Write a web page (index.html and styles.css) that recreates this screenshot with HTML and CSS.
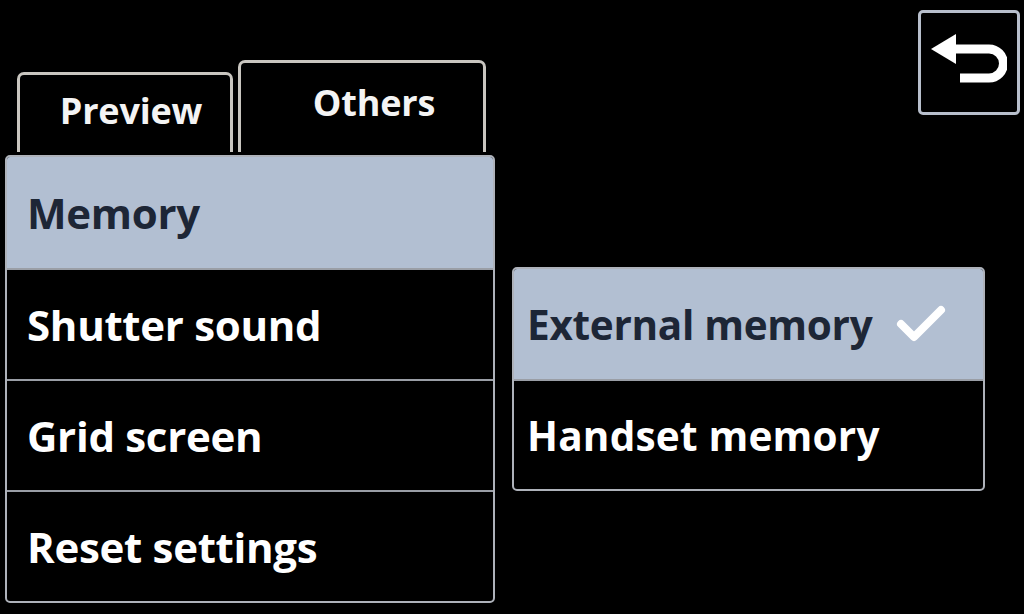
FILE: index.html
```html
<!DOCTYPE html>
<html lang="en">
<head>
  <meta charset="UTF-8" />
  <title>Camera settings</title>
  <link rel="stylesheet" href="styles.css">
</head>
<body>
  <div class="screen">
    <div class="panel">
      <div class="tabs">
        <div class="tab tab-preview">Preview</div>
        <div class="tab tab-others">Others</div>
      </div>
      <ul class="list">
        <li class="row selected">Memory</li>
        <li class="row">Shutter sound</li>
        <li class="row">Grid screen</li>
        <li class="row">Reset settings</li>
      </ul>
    </div>
    <div class="side">
      <div class="back">
        <svg class="back-icon" width="76" height="50" viewBox="0 0 76 50">
          <polygon points="0,16 25,1 25,31" fill="#fff"/>
          <path d="M22 16 H58 A14.5 14.5 0 0 1 58 45 H29" fill="none" stroke="#fff" stroke-width="9"/>
        </svg>
      </div>
      <ul class="submenu">
        <li class="row selected">External memory
          <svg class="check" width="50" height="40" viewBox="0 0 50 40"><polyline points="5,20 18,33 45,6" fill="none" stroke="#fff" stroke-width="8" stroke-linecap="round" stroke-linejoin="round"/></svg>
        </li>
        <li class="row">Handset memory</li>
      </ul>
    </div>
  </div>
</body>
</html>
```

FILE: styles.css
```css
body,html{margin:0;padding:0;background:#000;height:100%;font-family:'Open Sans',sans-serif;}
.screen{display:flex;padding:10px 4px 0 5px;}
.panel{width:490px;padding-top:50px;}
.tabs{display:flex;align-items:flex-end;height:92px;}
.tab{box-sizing:border-box;border:3px solid #c9c6c0;border-bottom:none;border-radius:7px 7px 0 0;color:#f4f4f4;font-weight:700;font-size:36px;text-align:center;letter-spacing:-0.2px;}
.tab-preview{width:216px;height:80px;margin-left:12px;padding-top:11px;padding-left:12px;}
.tab-others{width:248px;height:92px;margin-left:5px;padding-top:15px;padding-left:24px;}
ul{list-style:none;margin:0;padding:0;}
.list{margin-top:3px;border:2px solid #aeb2ba;border-radius:5px;overflow:hidden;}
.row{box-sizing:border-box;height:111px;display:flex;align-items:center;padding-left:20px;color:#fff;font-size:42px;font-weight:700;letter-spacing:-0.3px;border-top:2px solid #9a9ea6;}
.row:first-child{border-top:none;}
.row.selected{background:#b2bfd2;color:#1d2636;}
.side{flex:1;display:flex;flex-direction:column;align-items:flex-end;}
.back{box-sizing:border-box;width:102px;height:105px;border:3px solid #b8bfcc;border-radius:5px;display:flex;align-items:center;justify-content:center;}
.back-icon{margin-bottom:10px;}
.submenu{align-self:flex-start;width:469px;margin-top:152px;margin-left:17px;border:2px solid #aeb2ba;border-radius:5px;overflow:hidden;}
.submenu .row{height:110px;padding-left:13px;font-size:40.5px;}
.submenu .row:last-child{letter-spacing:0.2px;}
.check{margin-left:24px;}
```
